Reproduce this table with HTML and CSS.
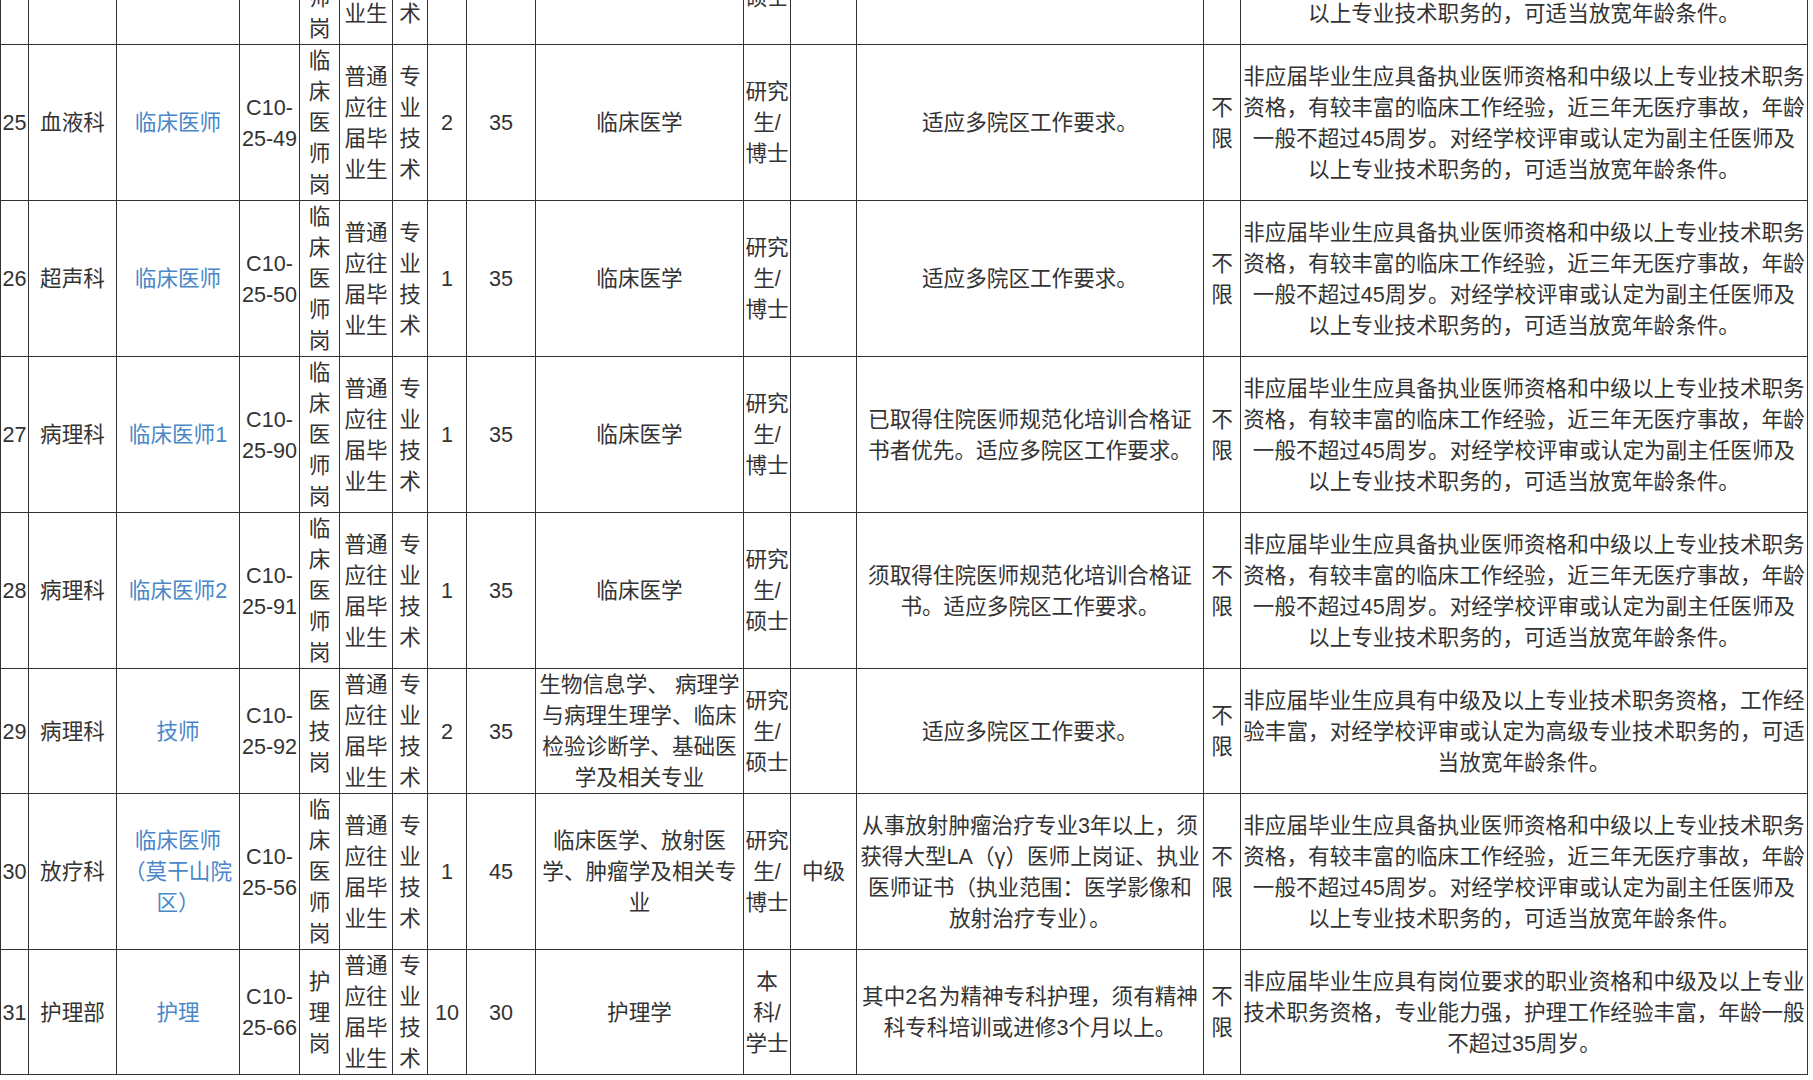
FILE: index.html
```html
<!DOCTYPE html>
<html lang="zh-CN">
<head>
<meta charset="utf-8">
<title>招聘岗位表</title>
<link rel="stylesheet" href="styles.css">
</head>
<body>
<table class="sheet">
<colgroup>
<col class="w-no"><col class="w-dept"><col class="w-post"><col class="w-code"><col class="w-type"><col class="w-target"><col class="w-cat"><col class="w-num"><col class="w-age"><col class="w-major"><col class="w-edu"><col class="w-title"><col class="w-cond"><col class="w-limit"><col class="w-remark">
</colgroup>
<tbody>
<tr>
<td></td><td></td><td></td><td></td><td>临床医师岗</td><td>普通应往届毕业生</td><td>专业技术</td><td></td><td></td><td></td><td>研究生/硕士</td><td></td><td></td><td></td>
<td>非应届毕业生应具备执业医师资格和中级以上专业技术职务<br>资格，有较丰富的临床工作经验，近三年无医疗事故，年龄<br>一般不超过45周岁。对经学校评审或认定为副主任医师及<br>以上专业技术职务的，可适当放宽年龄条件。</td>
</tr>
<tr>
<td>25</td><td>血液科</td><td><a class="link">临床医师</a></td><td>C10-25-49</td><td>临床医师岗</td><td>普通应往届毕业生</td><td>专业技术</td><td>2</td><td>35</td><td>临床医学</td><td>研究生/博士</td><td></td><td>适应多院区工作要求。</td><td>不限</td>
<td>非应届毕业生应具备执业医师资格和中级以上专业技术职务<br>资格，有较丰富的临床工作经验，近三年无医疗事故，年龄<br>一般不超过45周岁。对经学校评审或认定为副主任医师及<br>以上专业技术职务的，可适当放宽年龄条件。</td>
</tr>
<tr>
<td>26</td><td>超声科</td><td><a class="link">临床医师</a></td><td>C10-25-50</td><td>临床医师岗</td><td>普通应往届毕业生</td><td>专业技术</td><td>1</td><td>35</td><td>临床医学</td><td>研究生/博士</td><td></td><td>适应多院区工作要求。</td><td>不限</td>
<td>非应届毕业生应具备执业医师资格和中级以上专业技术职务<br>资格，有较丰富的临床工作经验，近三年无医疗事故，年龄<br>一般不超过45周岁。对经学校评审或认定为副主任医师及<br>以上专业技术职务的，可适当放宽年龄条件。</td>
</tr>
<tr>
<td>27</td><td>病理科</td><td><a class="link">临床医师1</a></td><td>C10-25-90</td><td>临床医师岗</td><td>普通应往届毕业生</td><td>专业技术</td><td>1</td><td>35</td><td>临床医学</td><td>研究生/博士</td><td></td><td>已取得住院医师规范化培训合格证<br>书者优先。适应多院区工作要求。</td><td>不限</td>
<td>非应届毕业生应具备执业医师资格和中级以上专业技术职务<br>资格，有较丰富的临床工作经验，近三年无医疗事故，年龄<br>一般不超过45周岁。对经学校评审或认定为副主任医师及<br>以上专业技术职务的，可适当放宽年龄条件。</td>
</tr>
<tr>
<td>28</td><td>病理科</td><td><a class="link">临床医师2</a></td><td>C10-25-91</td><td>临床医师岗</td><td>普通应往届毕业生</td><td>专业技术</td><td>1</td><td>35</td><td>临床医学</td><td>研究生/硕士</td><td></td><td>须取得住院医师规范化培训合格证<br>书。适应多院区工作要求。</td><td>不限</td>
<td>非应届毕业生应具备执业医师资格和中级以上专业技术职务<br>资格，有较丰富的临床工作经验，近三年无医疗事故，年龄<br>一般不超过45周岁。对经学校评审或认定为副主任医师及<br>以上专业技术职务的，可适当放宽年龄条件。</td>
</tr>
<tr>
<td>29</td><td>病理科</td><td><a class="link">技师</a></td><td>C10-25-92</td><td>医技岗</td><td>普通应往届毕业生</td><td>专业技术</td><td>2</td><td>35</td><td>生物信息学、 病理学<br>与病理生理学、临床<br>检验诊断学、基础医<br>学及相关专业</td><td>研究生/硕士</td><td></td><td>适应多院区工作要求。</td><td>不限</td>
<td>非应届毕业生应具有中级及以上专业技术职务资格，工作经<br>验丰富，对经学校评审或认定为高级专业技术职务的，可适<br>当放宽年龄条件。</td>
</tr>
<tr>
<td>30</td><td>放疗科</td><td><a class="link">临床医师<br>（莫干山院<br>区）</a></td><td>C10-25-56</td><td>临床医师岗</td><td>普通应往届毕业生</td><td>专业技术</td><td>1</td><td>45</td><td>临床医学、放射医<br>学、肿瘤学及相关专<br>业</td><td>研究生/博士</td><td>中级</td><td>从事放射肿瘤治疗专业3年以上，须<br>获得大型LA（γ）医师上岗证、执业<br>医师证书（执业范围：医学影像和<br>放射治疗专业）。</td><td>不限</td>
<td>非应届毕业生应具备执业医师资格和中级以上专业技术职务<br>资格，有较丰富的临床工作经验，近三年无医疗事故，年龄<br>一般不超过45周岁。对经学校评审或认定为副主任医师及<br>以上专业技术职务的，可适当放宽年龄条件。</td>
</tr>
<tr>
<td>31</td><td>护理部</td><td><a class="link">护理</a></td><td>C10-25-66</td><td>护理岗</td><td>普通应往届毕业生</td><td>专业技术</td><td>10</td><td>30</td><td>护理学</td><td>本科/学士</td><td></td><td>其中2名为精神专科护理，须有精神<br>科专科培训或进修3个月以上。</td><td>不限</td>
<td>非应届毕业生应具有岗位要求的职业资格和中级及以上专业<br>技术职务资格，专业能力强，护理工作经验丰富，年龄一般<br>不超过35周岁。</td>
</tr>
</tbody>
</table>
</body>
</html>
```

FILE: styles.css
```css
html, body {
  margin: 0;
  padding: 0;
  background: #ffffff;
}

body {
  font-family: "Liberation Sans", "Noto Sans CJK SC", sans-serif;
  font-size: 21.6px;
  line-height: 31px;
  color: #333333;
}

.sheet {
  border-collapse: collapse;
  table-layout: fixed;
  width: 1808px;
  margin-top: -112px;
}

.sheet td {
  border: 1px solid #333333;
  padding: 0 1px;
  text-align: center;
  vertical-align: middle;
}

.link {
  color: #4a87c9;
  text-decoration: none;
}

.w-no { width: 28px; }
.w-dept { width: 88px; }
.w-post { width: 123px; }
.w-code { width: 60px; }
.w-type { width: 40px; }
.w-target { width: 53px; }
.w-cat { width: 35px; }
.w-num { width: 39px; }
.w-age { width: 69px; }
.w-major { width: 208px; }
.w-edu { width: 47px; }
.w-title { width: 66px; }
.w-cond { width: 347px; }
.w-limit { width: 37px; }
.w-remark { width: 567px; }
```
